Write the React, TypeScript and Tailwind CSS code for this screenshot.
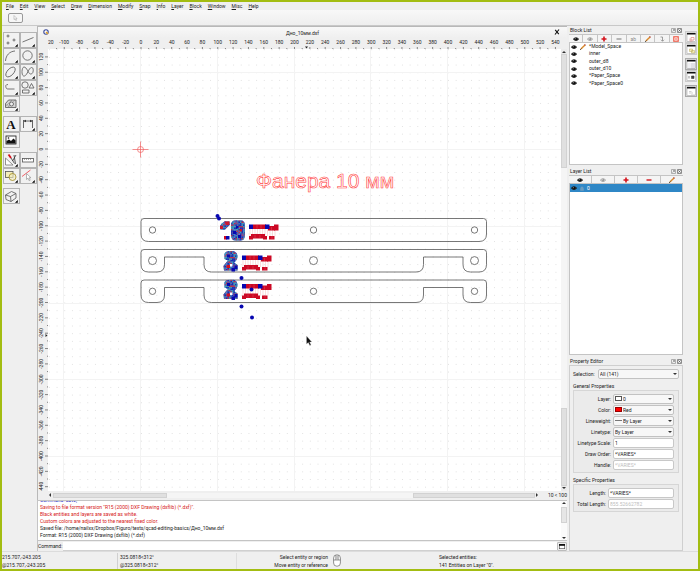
import type { ReactNode } from 'react';

const UNIT = 0.7675;
const ORIGIN = { x: 93, y: 100 };

const MENUS = ['File', 'Edit', 'View', 'Select', 'Draw', 'Dimension', 'Modify', 'Snap', 'Info', 'Layer', 'Block', 'Window', 'Misc', 'Help'];

const BLOCKS = ['*Model_Space', 'inner', 'outer_d8', 'outer_d10', '*Paper_Space', '*Paper_Space0'];

function range(from: number, to: number, step: number) {
  const out: number[] = [];
  for (let v = from; v <= to; v += step) out.push(v);
  return out;
}

const px = (v: number) => ORIGIN.x + v * UNIT;
const py = (v: number) => ORIGIN.y - v * UNIT;

/* ---------- icons ---------- */

function Eye({ dim = false }: { dim?: boolean }) {
  const color = dim ? '#9a9a9a' : '#111';
  return (
    <svg viewBox="0 0 12 8" className="w-[6px] h-[4px] shrink-0" fill="none" stroke={color}>
      <path d="M.6 4.2C2.5 1 9.500 1 11.400 4.200C9.500 7.800 2.500 7.800 .6 4.200Z" fill={dim ? '#ddd' : '#333'} strokeWidth="1.400" />
      <circle cx="6" cy="4" r="2.400" fill={color} />
      <circle cx="5.300" cy="3.500" r=".8" fill="#fff" stroke="none" />
    </svg>
  );
}

function Plus() {
  return (
    <svg viewBox="0 0 6 6" className="w-[6px] h-[6px]" stroke="#d4121b" strokeWidth="1.600">
      <path d="M3 .5V5.500M.5 3H5.500" />
    </svg>
  );
}

function Minus({ dim = false }: { dim?: boolean }) {
  return (
    <svg viewBox="0 0 6 6" className="w-[6px] h-[6px]" stroke={dim ? '#999' : '#d4121b'} strokeWidth="1.400">
      <path d="M.5 3H5.500" />
    </svg>
  );
}

function Pencil() {
  return (
    <svg viewBox="0 0 6 6" className="w-[6px] h-[6px] shrink-0">
      <path d="M.9 5.100L5 .9" stroke="#d98a2b" strokeWidth="1.400" />
      <path d="M.2 5.800L1.300 4.700" stroke="#333" strokeWidth="1" />
      <path d="M4.700 1.200L5.400 .5" stroke="#a33" strokeWidth="1.400" />
    </svg>
  );
}

function Insert() {
  return (
    <svg viewBox="0 0 6 6" className="w-[6px] h-[6px]" fill="none" stroke="#888" strokeWidth=".8">
      <path d="M1.500 1H3.500V5M2 3.800L3.500 5.300L5 3.800" />
    </svg>
  );
}

function RedBox() {
  return (
    <svg viewBox="0 0 6 6" className="w-[6px] h-[6px]">
      <rect x=".8" y=".8" width="4.400" height="4.400" fill="#fff" stroke="#ee5a48" strokeWidth="1.200" />
      <rect x="2.300" y="2.300" width="1.400" height="1.400" fill="#ee5a48" />
    </svg>
  );
}

function Caret({ dir = 'down' }: { dir?: 'up' | 'down' | 'left' | 'right' }) {
  const shapes = {
    up: 'M0 3L2 1L4 3Z',
    down: 'M0 1L2 3L4 1Z',
    left: 'M3 0L1 2L3 4Z',
    right: 'M1 0L3 2L1 4Z',
  };
  return (
    <svg viewBox="0 0 4 4" className="w-[4px] h-[4px] shrink-0" fill="#333">
      <path d={shapes[dir]} />
    </svg>
  );
}

function Mouse() {
  return (
    <svg viewBox="0 0 8 13" className="w-[8px] h-[13px]" fill="#fff" stroke="#666" strokeWidth=".7">
      <rect x=".6" y=".8" width="6.800" height="11.400" rx="3.200" />
      <path d="M.6 6H7.400M2.900 1V6M5.100 1V6" />
      <path d="M4 2V5" stroke="#999" />
    </svg>
  );
}

const TOOLS: { name: string; icon: ReactNode; menu?: boolean }[][] = [
  [
    { name: 'Point', menu: true, icon: <path d="M3.500 4H6.500M5 2.500V5.500M9.500 8H12.500M11 6.500V9.500M3.500 11H6.500M5 9.500V12.500" strokeWidth=".8" /> },
    { name: 'Line', menu: true, icon: <path d="M2.500 10L13.500 5.500" /> },
    { name: 'Arc', menu: true, icon: <path d="M2.500 13C3 7 6.500 3.500 12 3" /> },
    { name: 'Circle', menu: true, icon: <circle cx="7.500" cy="7.500" r="4.700" /> },
    { name: 'Ellipse', menu: true, icon: <ellipse cx="7.500" cy="8" rx="6" ry="3.200" transform="rotate(-47 7.500 8)" /> },
    { name: 'Spline', menu: true, icon: <path d="M4.500 12C1 13 1.500 3 4 3C7 3 8 9.500 10.500 10C14 10.500 14 3 11.500 3.500C8.500 4 7.500 11 4.500 12Z" /> },
    { name: 'Polyline', menu: true, icon: <path d="M5 4.500C2.500 4.500 2.500 6 3 7.500C3.500 9 4 9 6 9H11.500" /> },
    {
      name: 'Shape',
      menu: true,
      icon: (
        <>
          <circle cx="5" cy="5" r="3.200" />
          <path d="M9 8L11.500 3.500L14 8ZM2.500 10H9V13H2.500Z" />
        </>
      ),
    },
    {
      name: 'Hatch',
      menu: true,
      icon: (
        <>
          <path d="M2.500 11.500V7.500L5.500 4H13V11.500Z" fill="#d4d4d4" />
          <path d="M3 10L9 4M5 11L12 4M3 7.500L6.500 11" strokeWidth=".3" />
          <circle cx="8.500" cy="8" r="2" fill="#eee" />
        </>
      ),
    },
  ],
  [
    { name: 'Text', icon: <text x="8" y="12.500" textAnchor="middle" fontFamily="Liberation Serif, serif" fontWeight="bold" fontSize="13" fill="#111" stroke="none">A</text> },
    {
      name: 'Dimension',
      menu: true,
      icon: (
        <>
          <path d="M3.500 12V4M12.500 12V4M3.500 5H12.500" strokeWidth=".9" />
          <path d="M3.500 5L6 3.800V6.200ZM12.500 5L10 3.800V6.200Z" fill="#333" stroke="none" />
        </>
      ),
    },
    {
      name: 'Image',
      icon: (
        <>
          <rect x="3" y="4" width="10" height="8" fill="#fff" stroke="#111" />
          <path d="M3.500 11.500V9L6 7.500L8 9L10.500 6.500L12.500 8.500V11.500Z" fill="#111" stroke="none" />
          <circle cx="5.500" cy="6" r=".8" fill="#111" stroke="none" />
        </>
      ),
    },
  ],
  [
    {
      name: 'Modify',
      menu: true,
      icon: (
        <>
          <path d="M2.500 6V13H10Z" fill="#fff" stroke="#777" />
          <path d="M5.500 2.500L8 6" stroke="#d4121b" strokeWidth="1.800" />
          <path d="M8 6L11.500 11.500M11 3L12.500 12M13 3L9.500 9" stroke="#333" strokeWidth=".8" />
        </>
      ),
    },
    {
      name: 'Measure',
      icon: (
        <>
          <rect x="2.500" y="6.500" width="11" height="3.500" fill="#fff" />
          <path d="M4.500 6.500V8M6.500 6.500V8M8.500 6.500V8M10.500 6.500V8" strokeWidth=".5" />
        </>
      ),
    },
    {
      name: 'Block',
      menu: true,
      icon: (
        <>
          <rect x="2.500" y="3.500" width="7.500" height="6" fill="#f3edbc" />
          <circle cx="9.500" cy="9" r="3.500" stroke="#a08a20" fill="#f3edbc" fillOpacity=".6" />
        </>
      ),
    },
    {
      name: 'Select',
      menu: true,
      icon: (
        <>
          <path d="M2 8.500L10.500 2" stroke="#f0505a" strokeWidth=".9" />
          <path d="M6.500 5.500V11.500L8 10.200L9.200 12.700L10.200 12.200L9 9.800H11Z" fill="#fff" stroke="#888" strokeWidth=".6" />
        </>
      ),
    },
  ],
  [
    { name: 'Projection', menu: true, icon: <path d="M2.500 7L8.500 3.500L13 5.500V10L8 13.500L3 11.500ZM2.500 7L7.500 8.500L13 5.500M7.500 8.500L8 13.500" /> },
  ],
];

const DOCK_ICONS = [
  <path key="b" d="M5 5.500H8V8H5ZM4 6.500V9H6.500" fill="none" stroke="#d88" strokeWidth=".7" />,
  <path key="l" d="M3.500 5H6.500V7.500H3.500ZM5.500 6.500H8.500V9H5.500Z" fill="#f3edbc" stroke="#ba5" strokeWidth=".5" />,
  <path key="p" d="M2.500 5H3.500M4.500 5H9M2.500 7H3.500M4.500 7H9M2.500 9H3.500M4.500 9H9" stroke="#99a" strokeWidth=".6" />,
  <path key="v" d="M3 5V7.500M5.500 5H8V7.500H5.500Z" fill="#444" stroke="#444" strokeWidth=".6" />,
  <path key="c" d="M3 5.500H5.500M3 7H7M5 9H9" stroke="#bbb" strokeWidth=".7" />,
];

/* ---------- drawing ---------- */

const SLOTTED =
  'M144 249.500H483.500Q486.500 249.500 486.500 252.500V264.500Q486.500 272 479 272H470.500Q463 272 463 264.500V257H423.500V264.500Q423.500 272 416 272H211.500Q204 272 204 264.500V257H164.500V264.500Q164.500 272 157 272H148.500Q141 272 141 264.500V252.500Q141 249.500 144 249.500Z';

// grips of the lettering: [x, y, w, h, color]
const GRIPS: [number, number, number, number, string][] = [
  [253, 224.5, 13, 4.5, '#cc0824'],
  [249, 224.5, 4, 4.5, '#0707b0'],
  [268, 226, 7, 4.5, '#cc0824'],
  [265, 224.5, 4.5, 4.5, '#0707b0'],
  [274, 224.5, 4.5, 6, '#cc0824'],
  [251, 234, 14, 4.5, '#cc0824'],
  [249, 236, 4, 3.5, '#cc0824'],
  [263, 236, 4, 3.5, '#cc0824'],
  [269, 236, 5.5, 3.5, '#cc0824'],
];

const HANDLES = [[217.5, 216], [219, 218.5], [241.5, 278], [251.5, 289.5], [241.5, 306.5], [252, 317.5]];

const SPECKS = ['#1a2cb8', '#3f72b8', '#c03048', '#3f9ab4', '#2233b0', '#8a4a88', '#5080c8'];

function Speckle({ x, y, w, h, id, shape }: { x: number; y: number; w: number; h: number; id: string; shape: string }) {
  return (
    <g>
      <clipPath id={id}>
        <path d={shape} />
      </clipPath>
      <g clipPath={`url(#${id})`}>
        <rect x={x} y={y} width={w} height={h} fill="#3a64b0" />
        {range(0, h, 1.5).map((dy, r) =>
          range(0, w, 1.5).map((dx, c) => (
            <rect key={`${r}-${c}`} x={x + dx} y={y + dy} width="1.500" height="1.500" fill={SPECKS[(r * r * 3 + c * 5 + r * c * 2 + (c ^ r)) % 7]} />
          )),
        )}
      </g>
    </g>
  );
}

function Grips() {
  return (
    <g>
      {range(250, 276, 2.5).map((x) => (
        <path key={x} d={`M${x} 228V236`} stroke="#f5a3a3" strokeWidth=".4" />
      ))}
      {GRIPS.map(([x, y, w, h, fill], i) => (
        <rect key={i} x={x} y={y} width={w} height={h} fill={fill} />
      ))}
      <path d="M257 225V228.500M261 225V228.500M255 235V238M260 235V238M271.500 227V230M272 236V239" stroke="#e86070" strokeWidth=".4" />
    </g>
  );
}

function Digit({ dy, id }: { dy: number; id: string }) {
  return (
    <g transform={`translate(0 ${dy})`}>
      <Speckle
        id={id}
        x={223}
        y={251}
        w={15}
        h={20}
        shape="M224.500 254Q225 251 231 251T237.500 256Q237.500 260 234 262.500L237.500 265V270.500H224L223.500 266Q226 262.500 228 260.500L224.500 259Z"
      />
      <path d="M226.500 265H230V268H226.500Z" fill="#d81020" />
      <path d="M230 264H232.500V266.500H230Z" fill="#fff" />
      <path d="M227 254.500H230V257.500H227ZM234.500 265.500H237.500V269H234.500ZM231.500 268H235V271.500H231.500Z" fill="#0707b0" />
    </g>
  );
}

function Drawing() {
  return (
    <svg className="block w-full h-full bg-white" aria-label="Drawing">
      <defs>
        <pattern id="dots" x={ORIGIN.x} y={ORIGIN.y} width={UNIT * 10} height={UNIT * 10} patternUnits="userSpaceOnUse">
          <rect width=".8" height=".8" fill="#d2d2d2" />
        </pattern>
      </defs>
      <rect width="100%" height="100%" fill="url(#dots)" />
      {range(-100, 2000, 100).map((v) => (
        <path key={v} d={`M${Math.round(px(v)) - 0.5} 0V2000`} stroke="#f3f3f3" />
      ))}
      {range(-2000, 100, 100).map((v) => (
        <path key={v} d={`M0 ${Math.round(py(v)) + 0.5}H2000`} stroke="#f3f3f3" />
      ))}
      <g transform="translate(-48 -49)">
        <g fill="none" stroke="#f06060" strokeWidth=".7">
          <path d="M132.500 149.500H148.500M140.500 141.500V157.500" />
          <circle cx="140.500" cy="149.500" r="3" />
        </g>
        <text x="256" y="188" fontFamily="Liberation Sans, Arial, sans-serif" fontSize="21" fill="none" stroke="#ff4040" strokeWidth=".6">
          Фанера 10 мм
        </text>
        <g fill="none" stroke="#555" strokeWidth=".8">
          <path d="M144 218.500H483.500Q486.500 218.500 486.500 221.500V234Q486.500 241.500 479 241.500H148.500Q141 241.500 141 234V221.500Q141 218.500 144 218.500Z" />
          <path d={SLOTTED} />
          <path d={SLOTTED} transform="translate(0 30.500)" />
          {[152.5, 313.5, 474.5].map((x) => (
            <g key={x}>
              <circle cx={x} cy="230" r="3.200" />
              <circle cx={x} cy="260.600" r="4" />
              <circle cx={x} cy="291.300" r="3.200" />
            </g>
          ))}
        </g>
        <Speckle id="one" x={220} y={221} w={10} h={9} shape="M220 226Q221.500 223 224.500 221.500H229.500V225L225 229.500H220.500Z" />
        <path d="M224.500 221.500H229.500V225H226ZM220 226H223V229H220Z" fill="#cc1830" />
        <path d="M224 236H227V239.500H224Z" fill="#cc0824" />
        <path d="M226 236H229.500V239.500H226Z" fill="#0707b0" />
        <Speckle id="zero" x={231} y={220} w={14} h={21} shape="M231 226Q231 220.500 235 220.500H241Q245 220.500 245 226V235Q245 240.500 240 240.500H236Q231 240.500 231 235Z" />
        <path d="M233 231H236V234H233ZM238 235H241V238H238ZM236 226H238.500V228.500H236Z" fill="#0707b0" />
        <path d="M239.500 229H242V231.500H239.500Z" fill="#d81020" />
        <Digit dy={0} id="two" />
        <Digit dy={28.5} id="three" />
        <Grips />
        <g transform="translate(-7 31)">
          <Grips />
        </g>
        <g transform="translate(-7 59.500)">
          <Grips />
        </g>
        {HANDLES.map(([x, y]) => (
          <circle key={`${x}-${y}`} cx={x} cy={y} r="2" fill="#0707b0" />
        ))}
        <path d="M306.500 336V344L308.300 342.500L309.800 345.500L311 345L309.600 342H311.800Z" fill="#111" stroke="#ccc" strokeWidth=".3" />
      </g>
    </svg>
  );
}

function TopRuler() {
  return (
    <svg className="block w-full h-full" fontFamily="Roboto, sans-serif" fontSize="5" fill="#222">
      <text x="0" y="6">20</text>
      {range(-100, 540, 20).map((v) => (
        <text key={v} x={px(v)} y="6" textAnchor="middle">{v}</text>
      ))}
      {range(-110, 2000, 10).map((v) => (
        <path key={v} d={`M${px(v)} ${v % 20 === 0 ? 9 : 10}V11`} stroke="#555" strokeWidth=".7" />
      ))}
      <path d="M257 8.500H260L258.500 10.500Z" />
    </svg>
  );
}

function LeftRuler() {
  return (
    <svg className="block w-full h-full" fontFamily="Roboto, sans-serif" fontSize="5" fill="#222">
      {range(-440, 120, 20).map((v) => (
        <text key={v} transform={`translate(5 ${py(v)}) rotate(-90)`} textAnchor="middle">{v}</text>
      ))}
      {range(-2000, 120, 10).map((v) => (
        <path key={v} d={`M${v % 20 === 0 ? 7 : 9} ${py(v)}H10`} stroke="#555" strokeWidth=".7" />
      ))}
      <path d="M7.500 285L9.500 286.500L7.500 288Z" />
    </svg>
  );
}

/* ---------- panels ---------- */

function PanelTitle({ children }: { children: ReactNode }) {
  return (
    <div className="flex items-center justify-between h-[8px] px-[1px] shrink-0">
      <h2>{children}</h2>
      <div className="flex gap-[1px]">
        <button type="button" aria-label="Float" className="w-[5px] h-[5px]">
          <svg viewBox="0 0 5 5" className="block w-[5px] h-[5px]" fill="none" stroke="#777" strokeWidth=".6">
            <rect x=".4" y=".4" width="4.200" height="4.200" rx=".6" />
            <path d="M1.500 3.500L3.500 1.500M2 1.500H3.500V3" />
          </svg>
        </button>
        <button type="button" aria-label="Close" className="w-[5px] h-[5px]">
          <svg viewBox="0 0 5 5" className="block w-[5px] h-[5px]" fill="none" stroke="#555" strokeWidth=".7">
            <rect x=".4" y=".4" width="4.200" height="4.200" rx=".6" />
            <path d="M1.300 1.300L3.700 3.700M3.700 1.300L1.300 3.700" />
          </svg>
        </button>
      </div>
    </div>
  );
}

function IconBar({ items }: { items: { name: string; icon: ReactNode }[] }) {
  return (
    <div className="flex h-[9px] shrink-0 border-y border-[#c4c4c4] divide-x divide-[#c4c4c4]">
      {items.map(({ name, icon }) => (
        <button key={name} type="button" aria-label={name} className="flex flex-1 items-center justify-center bg-[#f4f4f4] leading-[6px]">
          {icon}
        </button>
      ))}
    </div>
  );
}

function Field({ id, label, narrow, children }: { id: string; label: string; narrow?: boolean; children: ReactNode }) {
  return (
    <div className="flex items-center h-[11px] gap-[2px]">
      <label htmlFor={id} className={narrow ? 'w-[32px] text-right whitespace-nowrap' : 'w-[37px] text-right whitespace-nowrap'}>
        {label}
      </label>
      {children}
    </div>
  );
}

function Select({ id, value, swatch }: { id: string; value: string; swatch?: ReactNode }) {
  return (
    <div className="flex flex-1 min-w-0 items-center gap-[1px] h-[10px] px-[1px] rounded-[2px] border border-[#c2c2c2] bg-[#f7f7f7]">
      {swatch}
      <select id={id} className="flex-1 min-w-0 appearance-none bg-transparent">
        <option>{value}</option>
      </select>
      <Caret />
    </div>
  );
}

function TextInput({ id, value, disabled }: { id: string; value: string; disabled?: boolean }) {
  return (
    <input
      id={id}
      defaultValue={value}
      disabled={disabled}
      className="flex-1 min-w-0 h-[10px] px-[1px] rounded-[2px] border border-[#c8c8c8] bg-white disabled:text-[#bdbdbd]"
    />
  );
}

function BlockList() {
  return (
    <section className="flex flex-col h-[139px]">
      <PanelTitle>Block List</PanelTitle>
      <IconBar
        items={[
          { name: 'Show all blocks', icon: <Eye /> },
          { name: 'Hide all blocks', icon: <Eye dim /> },
          { name: 'Add block', icon: <Plus /> },
          { name: 'Remove block', icon: <Minus dim /> },
          { name: 'Rename block', icon: <span className="text-[#888]">ab</span> },
          { name: 'Edit block', icon: <Pencil /> },
          { name: 'Insert block', icon: <Insert /> },
          { name: 'Edit main drawing', icon: <RedBox /> },
        ]}
      />
      <div className="flex-1 border border-t-0 border-[#c4c4c4] bg-white">
        <ul className="grid grid-rows-6 h-[44px] leading-[7px]">
          {BLOCKS.map((name, i) => (
            <li key={name} className="flex items-center pl-[1px]">
              <Eye />
              <span className="flex items-center w-[12px] pl-[3px]">{i === 0 && <Pencil />}</span>
              {name}
            </li>
          ))}
        </ul>
      </div>
    </section>
  );
}

function LayerList() {
  return (
    <section className="flex flex-col flex-1 min-h-0">
      <PanelTitle>Layer List</PanelTitle>
      <IconBar
        items={[
          { name: 'Show all layers', icon: <Eye /> },
          { name: 'Hide all layers', icon: <Eye dim /> },
          { name: 'Add layer', icon: <Plus /> },
          { name: 'Remove layer', icon: <Minus /> },
          { name: 'Edit layer', icon: <Pencil /> },
        ]}
      />
      <ul className="flex-1 border border-t-0 border-[#c4c4c4] bg-white">
        <li className="flex items-center h-[8px] pl-[1px] gap-[3px] bg-[#2f87c6] text-white">
          <Eye />
          <svg viewBox="0 0 4 5" className="w-[4px] h-[5px]" fill="#6a9cc0" stroke="#6a9cc0" strokeWidth=".6">
            <path d="M.5 2.500H3.500V4.500H.5ZM1 2.500V1H3V2.500" />
          </svg>
          0
        </li>
      </ul>
    </section>
  );
}

function PropertyEditor() {
  return (
    <section className="flex flex-col h-[194px]">
      <PanelTitle>Property Editor</PanelTitle>
      <div className="flex-1 border border-[#cfcfcf] px-[3px] pt-[3px]">
        <div className="flex items-center gap-[3px]">
          <label htmlFor="selection">Selection:</label>
          <Select id="selection" value="All (141)" />
        </div>
        <h3 className="mt-[3px]">General Properties</h3>
        <div className="py-[2px] pr-[4px] border border-[#d6d6d6] bg-[#ebebeb]">
          <Field id="layer" label="Layer:">
            <Select id="layer" value="0" swatch={<span className="w-[7px] h-[5px] border border-[#555] bg-white" />} />
          </Field>
          <Field id="color" label="Color:">
            <Select id="color" value="Red" swatch={<span className="w-[7px] h-[5px] border border-[#900] bg-[#f00]" />} />
          </Field>
          <Field id="lineweight" label="Lineweight:">
            <Select id="lineweight" value="By Layer" swatch={<span className="w-[7px] h-[1px] bg-[#777]" />} />
          </Field>
          <Field id="linetype" label="Linetype:">
            <Select id="linetype" value="By Layer" />
          </Field>
          <Field id="scale" label="Linetype Scale:">
            <TextInput id="scale" value="1" />
          </Field>
          <Field id="order" label="Draw Order:">
            <TextInput id="order" value="*VARIES*" />
          </Field>
          <Field id="handle" label="Handle:">
            <TextInput id="handle" value="*VARIES*" disabled />
          </Field>
        </div>
        <h3 className="mt-[3px]">Specific Properties</h3>
        <div className="py-[2px] pr-[4px] border border-[#d6d6d6] bg-[#ebebeb]">
          <Field id="length" label="Length:" narrow>
            <TextInput id="length" value="*VARIES*" />
          </Field>
          <Field id="total" label="Total Length:" narrow>
            <TextInput id="total" value="855.52662782" disabled />
          </Field>
        </div>
      </div>
    </section>
  );
}

function Toolbox() {
  return (
    <aside className="flex flex-col w-[35px] shrink-0 pl-[1px] pt-[6px] gap-[4px]">
      {TOOLS.map((group, i) => (
        <div key={i} className="grid grid-cols-2 w-[33px]">
          {group.map(({ name, icon, menu }) => (
            <button key={name} type="button" aria-label={name} className="w-[17px] h-[16px] outline outline-[#b4b4b4] -outline-offset-1 bg-[#f1f1f1]">
              <svg viewBox="0 0 16 16" className="block w-[16px] h-[16px]" fill="none" stroke="#555" strokeWidth=".8">
                {icon}
                {menu && <path d="M12.500 14.500H14.500V12.500Z" fill="#000" stroke="#000" strokeWidth=".5" />}
              </svg>
            </button>
          ))}
        </div>
      ))}
    </aside>
  );
}

function Document() {
  return (
    <section className="flex flex-col flex-1 min-h-0 border-l border-t border-[#b8b8b8]">
      <header className="relative flex items-center justify-center h-[11px] shrink-0 bg-gradient-to-b from-[#f8f8f8] to-[#efefef]">
        <svg viewBox="0 0 6 6" className="absolute left-[5px] top-[2px] w-[6px] h-[6px]">
          <circle cx="3" cy="3" r="2.200" fill="#fff" stroke="#3a4a9a" strokeWidth="1.100" />
          <path d="M3 3L5 5" stroke="#e0a020" strokeWidth="1.400" />
        </svg>
        Дно_10мм.dxf
        <button type="button" aria-label="Close document" className="absolute right-[7px] top-[2px]">
          <svg viewBox="0 0 6 6" className="block w-[6px] h-[6px]" stroke="#111" strokeWidth="1.100">
            <path d="M1 5.500L5 .5M1.200 .8L4.800 5.200" />
          </svg>
        </button>
      </header>
      <div className="grid flex-1 min-h-0 grid-cols-[10px_minmax(0,1fr)_6px] grid-rows-[11px_minmax(0,1fr)_9px]">
        <span />
        <TopRuler />
        <span />
        <LeftRuler />
        <Drawing />
        <div className="flex flex-col items-center bg-[#ebebeb]">
          <span className="flex items-center h-[5px]"><Caret dir="up" /></span>
          <span className="w-full grow-[113] bg-[#e0e0e0] border border-[#d2d2d2]" />
          <span className="w-full grow-[243] bg-[#f5f5f5]" />
          <span className="w-full grow-[77] bg-[#e0e0e0] border border-[#d2d2d2]" />
          <span className="flex items-center h-[5px]"><Caret /></span>
        </div>
        <div className="col-span-3 flex items-start pl-[10px]">
          <div className="flex flex-1 items-center h-[8px]">
            <span className="w-[5px]"><Caret dir="left" /></span>
            <span className="h-[5px] grow-[113] bg-[#e0e0e0] border border-[#d2d2d2]" />
            <span className="h-[5px] grow-[247] bg-[#f5f5f5]" />
            <span className="h-[5px] grow-[121] bg-[#e0e0e0] border border-[#d2d2d2]" />
            <span className="w-[5px]"><Caret dir="right" /></span>
          </div>
          <span className="w-[27px] text-right whitespace-nowrap">10 &lt; 100</span>
        </div>
      </div>
    </section>
  );
}

function CommandLine() {
  return (
    <section className="shrink-0 border-l border-[#c4c4c4]">
      <div className="flex h-[41px] border-y border-[#c4c4c4] bg-white">
        <div className="flex flex-col flex-1 justify-end overflow-hidden pl-[2px] pb-[1px] leading-[7px] text-[#d62020]">
          <p className="text-[#2020c0]">Command: save;</p>
          <p>Saving to file format version "R15 (2000) DXF Drawing (dxflib) (*.dxf)".</p>
          <p>Black entities and layers are saved as white.</p>
          <p>Custom colors are adjusted to the nearest fixed color.</p>
          <p className="text-[#222]">Saved file: /home/nailxx/Dropbox/Figuro/texts/qcad-editing-basics/Дно_10мм.dxf</p>
          <p className="text-[#222]">Format: R15 (2000) DXF Drawing (dxflib) (*.dxf)</p>
        </div>
        <div className="flex flex-col items-center justify-between w-[6px] bg-[#fafafa]">
          <Caret dir="up" />
          <span className="w-full h-[16px] mb-[12px] bg-[#e6e6e6] border border-[#d2d2d2]" />
          <Caret />
        </div>
      </div>
      <div className="flex items-center h-[10px]">
        <label htmlFor="command" className="w-[25px]">Command:</label>
        <input id="command" className="flex-1 h-[9px] bg-white border-b border-[#d0d0d0]" />
        <button type="button" aria-label="Toggle history" className="flex items-center justify-center w-[10px] h-[9px] border border-[#bbb] rounded-[1px]">
          <svg viewBox="0 0 6 5" className="w-[6px] h-[5px]">
            <rect x=".3" y=".3" width="5.400" height="4.400" fill="#fff" stroke="#444" strokeWidth=".6" />
            <rect width="6" height="1.800" fill="#111" />
          </svg>
        </button>
      </div>
    </section>
  );
}

function StatusBar() {
  return (
    <footer className="grid grid-cols-[116px_119px_96px_1fr_259px] items-center h-[18px] shrink-0 border-t border-[#dcdcdc] leading-[8px] whitespace-nowrap">
      <div className="border-r border-[#d0d0d0]">
        <p>215.707,-243.205</p>
        <p>@215.707,-243.205</p>
      </div>
      <div className="pl-[2px] border-r border-[#dedede]">
        <p>325.0818&lt;312°</p>
        <p>@325.0818&lt;312°</p>
      </div>
      <div className="justify-self-end pr-[5px] text-right">
        <p>Select entity or region</p>
        <p>Move entity or reference</p>
      </div>
      <Mouse />
      <div>
        <p>Selected entities:</p>
        <p>141 Entities on Layer "0".</p>
      </div>
    </footer>
  );
}

export default function App() {
  return (
    <div className="flex flex-col h-screen overflow-hidden border-2 border-[#a3bd12] bg-[#efefef] font-['Roboto',sans-serif] text-[5px] leading-[8px] text-[#222]">
      <nav className="flex gap-[6px] h-[8px] pl-[4px] shrink-0">
        {MENUS.map((name) => (
          <button key={name} type="button">
            <span className="underline">{name[0]}</span>
            {name.slice(1)}
          </button>
        ))}
      </nav>
      <div className="flex items-center h-[15px] pl-[6px] shrink-0 bg-gradient-to-b from-[#f8f8f8] to-[#eeeeee]">
        <button type="button" aria-label="Pointer" className="flex items-center justify-center w-[15px] h-[10px] rounded-[2px] border border-[#999] bg-[#f6f6f6]">
          <svg viewBox="0 0 5 6" className="w-[5px] h-[6px]" fill="#fff" stroke="#999" strokeWidth=".5">
            <path d="M1 .5V4.500L2 3.800L2.800 5.500L3.500 5.200L2.800 3.500H4Z" />
          </svg>
        </button>
      </div>
      <div className="flex flex-1 min-h-0 border-t border-[#c8c8c8]">
        <Toolbox />
        <main className="flex flex-col flex-1 min-w-0">
          <Document />
          <CommandLine />
        </main>
        <div className="flex flex-col w-[114px] shrink-0 ml-[2px] gap-[2px]">
          <BlockList />
          <LayerList />
          <PropertyEditor />
        </div>
        <div className="flex flex-col w-[15px] shrink-0 items-center pt-[5px]">
          {DOCK_ICONS.map((icon, i) => (
            <button
              key={i}
              type="button"
              aria-label={`Toggle panel ${i + 1}`}
              className={i % 2 === 0 && i > 0 ? 'w-[12px] h-[12px] mt-[3px] border border-[#aaa] bg-[#ddd]' : 'w-[12px] h-[12px] border border-[#ccc] bg-[#e8e8e8]'}
            >
              <svg viewBox="0 0 10 10" className="block w-[10px] h-[10px]">
                <rect x="1" y="1" width="8.500" height="8.500" fill="#fff" stroke="#999" strokeWidth=".5" />
                <rect x="1" y="1" width="8.500" height="1.500" fill="#111" />
                {icon}
              </svg>
            </button>
          ))}
        </div>
      </div>
      <StatusBar />
    </div>
  );
}
